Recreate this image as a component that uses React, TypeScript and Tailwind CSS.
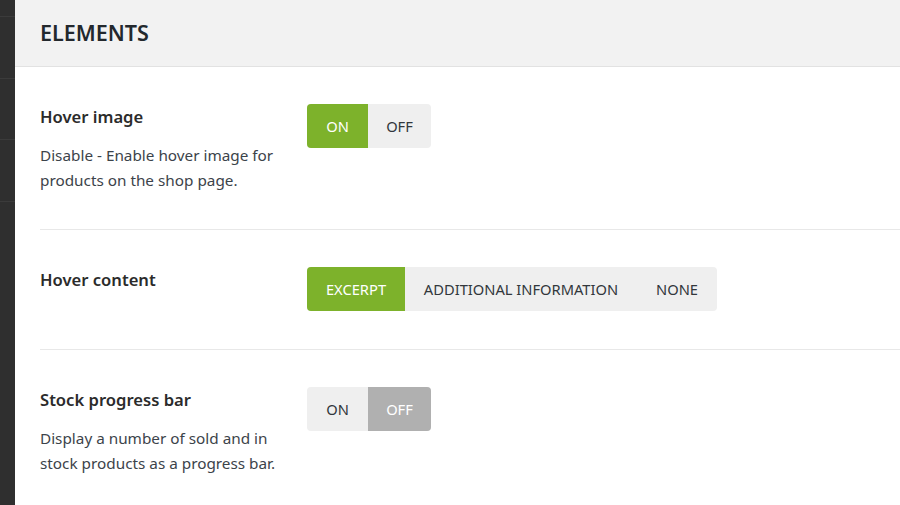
import React from "react";

type Opt = { label: string; w: number };

function Seg({ options, active, activeClass }: { options: Opt[]; active: number; activeClass: string }) {
  return (
    <div className="flex h-[44px] rounded-[4px] overflow-hidden bg-[#efefef]">
      {options.map((o, i) => (
        <div
          key={o.label}
          style={{ width: o.w }}
          className={
            "flex items-center justify-center text-[14.7px] " +
            (i === active ? activeClass : "text-[#32373c]")
          }
        >
          {o.label}
        </div>
      ))}
    </div>
  );
}

function Row({
  title,
  desc,
  children,
  last,
  pb,
}: {
  title: string;
  desc?: string[];
  children: React.ReactNode;
  last?: boolean;
  pb: string;
}) {
  return (
    <div className={"shrink-0 flex pt-[37px] " + pb + " " + (last ? "" : "border-b border-[#e8e8e8]")}>
      <div className="w-[267px] shrink-0">
        <div className="text-[16.6px] font-semibold leading-[26px] text-[#2b2b2b]">{title}</div>
        {desc && (
          <div className="mt-[13px] text-[15.3px] leading-[25px] text-[#3c434a]">
            {desc.map((d) => (
              <div key={d}>{d}</div>
            ))}
          </div>
        )}
      </div>
      <div>{children}</div>
    </div>
  );
}

export default function App() {
  return (
    <div
      className="flex w-[900px] h-[505px] overflow-hidden bg-white"
      style={{ fontFamily: '"Noto Sans", "Open Sans", sans-serif' }}
    >
      <div className="w-[15px] shrink-0 bg-[#2f2f2f] flex flex-col">
        <div className="shrink-0 h-[17px] border-b border-[#3b3b3b]" />
        <div className="shrink-0 h-[62px] border-b border-[#3b3b3b]" />
        <div className="shrink-0 h-[61px] border-b border-[#3b3b3b]" />
        <div className="shrink-0 h-[62px] border-b border-[#3b3b3b]" />
      </div>
      <div className="flex-1 flex flex-col">
        <div className="shrink-0 h-[67px] bg-[#f2f2f2] border-b border-[#e2e2e2] flex items-center pl-[25px]">
          <div className="text-[21.5px] font-semibold text-[#23282d]">ELEMENTS</div>
        </div>
        <div className="shrink-0 pl-[25px] flex flex-col">
          <Row
            title="Hover image"
            desc={["Disable - Enable hover image for", "products on the shop page."]}
            pb="pb-[36px]"
          >
            <Seg
              options={[
                { label: "ON", w: 61 },
                { label: "OFF", w: 63 },
              ]}
              active={0}
              activeClass="bg-[#7db22b] text-white"
            />
          </Row>
          <Row title="Hover content" pb="pb-[38px]">
            <Seg
              options={[
                { label: "EXCERPT", w: 98 },
                { label: "ADDITIONAL INFORMATION", w: 232 },
                { label: "NONE", w: 80 },
              ]}
              active={0}
              activeClass="bg-[#7db22b] text-white"
            />
          </Row>
          <Row
            title="Stock progress bar"
            desc={["Display a number of sold and in", "stock products as a progress bar."]}
            last
            pb="pb-[38px]"
          >
            <Seg
              options={[
                { label: "ON", w: 61 },
                { label: "OFF", w: 63 },
              ]}
              active={1}
              activeClass="bg-[#b0b0b0] text-white"
            />
          </Row>
        </div>
      </div>
    </div>
  );
}
